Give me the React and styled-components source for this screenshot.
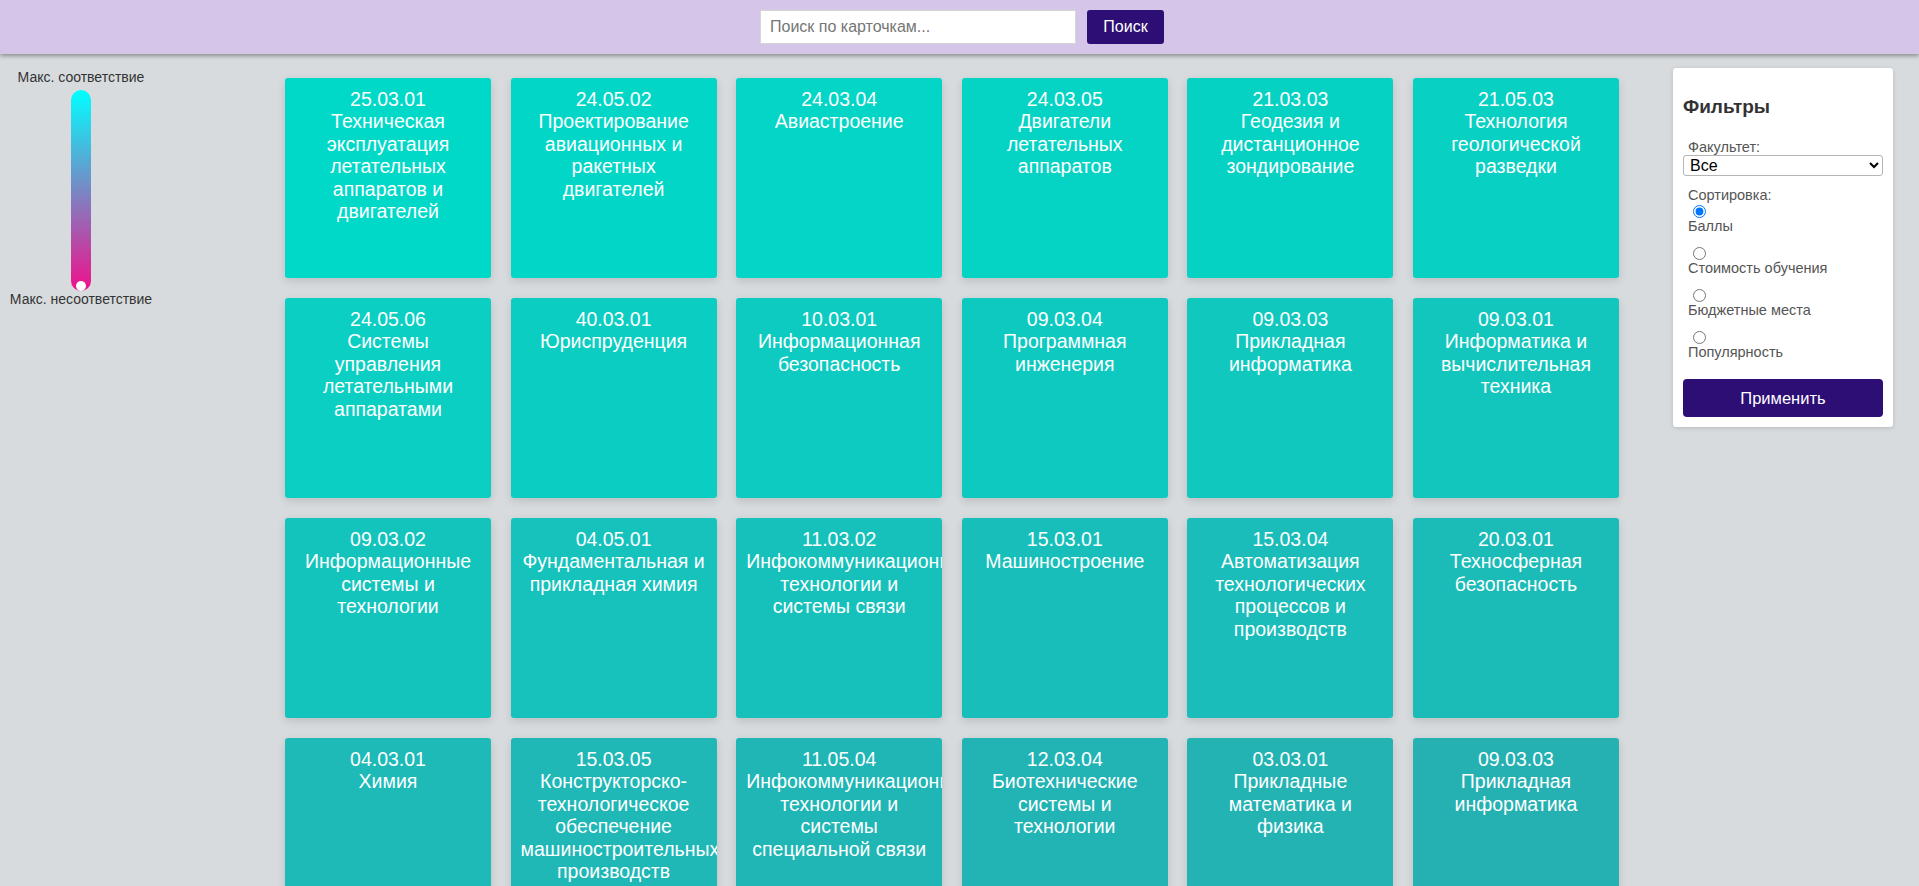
import React, { useState } from 'react';
import styled, { createGlobalStyle } from 'styled-components';

const GlobalStyle = createGlobalStyle`
  html, body {
    margin: 0;
    padding: 0;
  }
  body {
    background: #d8dbde;
    font-family: "Liberation Sans", Arial, sans-serif;
  }
`;

const Header = styled.header`
  position: relative;
  z-index: 2;
  height: 54px;
  background: #d4c5e9;
  box-shadow: 0 2px 4px rgba(0, 0, 0, 0.35);
  display: flex;
  align-items: center;
  justify-content: center;
  padding-left: 5px;
`;

const SearchForm = styled.form`
  display: flex;
  gap: 11px;
`;

const SearchInput = styled.input`
  box-sizing: border-box;
  width: 316px;
  height: 34px;
  padding: 0 9px;
  border: 1px solid #d6d6d6;
  border-radius: 0;
  background: #fff;
  font-family: inherit;
  font-size: 16px;
  color: #222;
  outline: none;
  &::placeholder {
    color: #767676;
  }
`;

const SearchButton = styled.button`
  width: 77px;
  height: 34px;
  border: none;
  border-radius: 3px;
  background: #2d0e74;
  color: #fff;
  font-family: inherit;
  font-size: 16px;
  cursor: pointer;
`;

const Layout = styled.div`
  display: flex;
  align-items: flex-start;
  padding-bottom: 40px;
`;

const Sidebar = styled.aside`
  width: 162px;
  flex-shrink: 0;
  padding-top: 15px;
  display: flex;
  flex-direction: column;
  align-items: center;
  font-size: 14px;
  line-height: 17px;
  color: #333;
`;

const ScaleTrack = styled.div`
  position: relative;
  width: 20px;
  height: 201px;
  margin-top: 4px;
  border-radius: 10px;
  background: linear-gradient(to bottom, #00ffff, #f0108a);
`;

const ScaleThumb = styled.span`
  position: absolute;
  left: 5px;
  bottom: 0;
  width: 10px;
  height: 10px;
  border-radius: 50%;
  background: #fff;
`;

const CardGrid = styled.main`
  display: grid;
  grid-template-columns: repeat(6, 206px);
  column-gap: 19.6px;
  row-gap: 20px;
  margin: 24px 0 0 123px;
`;

const Card = styled.article`
  box-sizing: border-box;
  height: 200px;
  padding: 10px;
  overflow: hidden;
  border-radius: 3px;
  background: ${(p) => p.$bg};
  box-shadow: 0 3px 8px rgba(0, 0, 0, 0.13);
  color: #fff;
  text-align: center;
  font-size: 19.5px;
  line-height: 22.4px;
  cursor: pointer;
`;

const FilterPanel = styled.aside`
  box-sizing: border-box;
  width: 220px;
  flex-shrink: 0;
  margin: 14px 0 0 54px;
  padding: 10px;
  background: #fff;
  border-radius: 3px;
  box-shadow: 0 1px 4px rgba(0, 0, 0, 0.15);
`;

const PanelTitle = styled.h3`
  margin: 18px 0 21px;
  font-size: 19px;
  line-height: 22px;
  font-weight: bold;
  color: #333;
`;

const FieldLabel = styled.div`
  padding-left: 5px;
  font-size: 14.5px;
  line-height: 16px;
  color: #555;
`;

const Select = styled.select`
  display: block;
  box-sizing: border-box;
  width: 200px;
  height: 21px;
  padding: 0 2px;
  border: 1px solid #b5b5b5;
  border-radius: 3px;
  background: #fff;
  font-family: inherit;
  font-size: 16px;
  color: #000;
`;

const SortGroup = styled.div`
  margin-top: 11px;
`;

const RadioOption = styled.label`
  display: flex;
  flex-direction: column;
  align-items: flex-start;
  & + & {
    margin-top: 11px;
  }
`;

const Radio = styled.input`
  width: 13px;
  height: 13px;
  margin: 2px 0 0 10px;
`;

const ApplyButton = styled.button`
  display: block;
  width: 200px;
  height: 38px;
  margin-top: 19px;
  border: none;
  border-radius: 4px;
  background: #2d0e74;
  color: #fff;
  font-family: inherit;
  font-size: 16.5px;
  cursor: pointer;
`;

const programs = [
  ['25.03.01', 'Техническая эксплуатация летательных аппаратов и двигателей'],
  ['24.05.02', 'Проектирование авиационных и ракетных двигателей'],
  ['24.03.04', 'Авиастроение'],
  ['24.03.05', 'Двигатели летательных аппаратов'],
  ['21.03.03', 'Геодезия и дистанционное зондирование'],
  ['21.05.03', 'Технология геологической разведки'],
  ['24.05.06', 'Системы управления летательными аппаратами'],
  ['40.03.01', 'Юриспруденция'],
  ['10.03.01', 'Информационная безопасность'],
  ['09.03.04', 'Программная инженерия'],
  ['09.03.03', 'Прикладная информатика'],
  ['09.03.01', 'Информатика и вычислительная техника'],
  ['09.03.02', 'Информационные системы и технологии'],
  ['04.05.01', 'Фундаментальная и прикладная химия'],
  ['11.03.02', 'Инфокоммуникационные технологии и системы связи'],
  ['15.03.01', 'Машиностроение'],
  ['15.03.04', 'Автоматизация технологических процессов и производств'],
  ['20.03.01', 'Техносферная безопасность'],
  ['04.03.01', 'Химия'],
  ['15.03.05', 'Конструкторско-технологическое обеспечение машиностроительных производств'],
  ['11.05.04', 'Инфокоммуникационные технологии и системы специальной связи'],
  ['12.03.04', 'Биотехнические системы и технологии'],
  ['03.03.01', 'Прикладные математика и физика'],
  ['09.03.03', 'Прикладная информатика'],
  ['01.03.02', 'Прикладная математика и информатика'],
  ['02.03.02', 'Фундаментальная информатика и информационные технологии'],
  ['03.03.02', 'Физика'],
  ['05.03.06', 'Экология и природопользование'],
  ['06.03.01', 'Биология'],
  ['11.03.01', 'Радиотехника'],
  ['11.03.03', 'Конструирование и технология электронных средств'],
  ['11.03.04', 'Электроника и наноэлектроника'],
  ['12.03.01', 'Приборостроение'],
  ['13.03.01', 'Теплоэнергетика и теплотехника'],
  ['13.03.02', 'Электроэнергетика и электротехника'],
  ['15.03.02', 'Технологические машины и оборудование'],
  ['15.03.06', 'Мехатроника и робототехника'],
  ['18.03.01', 'Химическая технология'],
  ['19.03.01', 'Биотехнология'],
  ['21.03.01', 'Нефтегазовое дело'],
  ['22.03.01', 'Материаловедение и технологии материалов'],
  ['23.03.01', 'Технология транспортных процессов'],
  ['24.03.01', 'Ракетные комплексы и космонавтика'],
  ['24.03.02', 'Системы управления движением и навигация'],
  ['27.03.01', 'Стандартизация и метрология'],
  ['27.03.02', 'Управление качеством'],
  ['27.03.04', 'Управление в технических системах'],
  ['28.03.01', 'Нанотехнологии и микросистемная техника'],
  ['38.03.01', 'Экономика'],
  ['38.03.02', 'Менеджмент'],
  ['38.03.04', 'Государственное и муниципальное управление'],
  ['38.03.05', 'Бизнес-информатика'],
  ['39.03.01', 'Социология'],
  ['41.03.05', 'Международные отношения'],
  ['42.03.01', 'Реклама и связи с общественностью'],
  ['45.03.02', 'Лингвистика'],
  ['37.03.01', 'Психология'],
  ['43.03.02', 'Туризм'],
  ['44.03.01', 'Педагогическое образование'],
  ['54.03.01', 'Дизайн'],
  ['01.03.01', 'Математика'],
  ['01.03.03', 'Механика и математическое моделирование'],
  ['02.03.01', 'Математика и компьютерные науки'],
  ['03.03.03', 'Радиофизика'],
  ['04.03.02', 'Химия, физика и механика материалов'],
  ['05.03.01', 'Геология'],
  ['05.03.02', 'География'],
  ['05.03.03', 'Картография и геоинформатика'],
  ['06.03.02', 'Почвоведение'],
  ['07.03.01', 'Архитектура'],
  ['08.03.01', 'Строительство'],
  ['10.05.01', 'Компьютерная безопасность'],
  ['10.05.03', 'Информационная безопасность автоматизированных систем'],
  ['11.05.01', 'Радиоэлектронные системы и комплексы'],
  ['12.03.02', 'Оптотехника'],
  ['12.03.03', 'Фотоника и оптоинформатика'],
  ['14.03.01', 'Ядерная энергетика и теплофизика'],
  ['15.03.03', 'Прикладная механика'],
  ['16.03.01', 'Техническая физика'],
  ['17.05.01', 'Боеприпасы и взрыватели'],
  ['20.03.02', 'Природообустройство и водопользование'],
  ['21.05.01', 'Прикладная геодезия'],
  ['23.03.02', 'Наземные транспортно-технологические комплексы'],
  ['23.03.03', 'Эксплуатация транспортно-технологических машин и комплексов'],
  ['24.05.01', 'Проектирование, производство и эксплуатация ракет'],
  ['25.03.02', 'Техническая эксплуатация авиационных электросистем'],
  ['25.05.05', 'Эксплуатация воздушных судов и организация воздушного движения'],
  ['26.03.01', 'Управление водным транспортом'],
  ['27.03.03', 'Системный анализ и управление'],
  ['27.03.05', 'Инноватика'],
  ['29.03.04', 'Технология художественной обработки материалов'],
  ['38.03.03', 'Управление персоналом'],
  ['40.05.01', 'Правовое обеспечение национальной безопасности'],
  ['42.03.02', 'Журналистика'],
  ['46.03.01', 'История'],
  ['47.03.01', 'Философия'],
];

// colour slides from bright turquoise towards a duller teal with the rank
const cardColor = (i) => {
  const t = i / 23;
  const r = Math.round(0 + 37 * t);
  const g = Math.round(217 - 40 * t);
  const b = Math.round(200 - 22 * t);
  return `rgb(${r}, ${g}, ${b})`;
};

const sortOptions = ['Баллы', 'Стоимость обучения', 'Бюджетные места', 'Популярность'];

const App = () => {
  const [query, setQuery] = useState('');
  const [sort, setSort] = useState('Баллы');

  return (
    <>
      <GlobalStyle />
      <Header>
        <SearchForm onSubmit={(e) => e.preventDefault()}>
          <SearchInput
            value={query}
            onChange={(e) => setQuery(e.target.value)}
            placeholder='Поиск по карточкам...'
          />
          <SearchButton type='submit'>Поиск</SearchButton>
        </SearchForm>
      </Header>
      <Layout>
        <Sidebar>
          <span>Макс. соответствие</span>
          <ScaleTrack>
            <ScaleThumb />
          </ScaleTrack>
          <span>Макс. несоответствие</span>
        </Sidebar>
        <CardGrid>
          {programs.map(([code, name], i) => (
            <Card key={code + i} $bg={cardColor(i)}>
              <div>{code}</div>
              <div>{name}</div>
            </Card>
          ))}
        </CardGrid>
        <FilterPanel>
          <PanelTitle>Фильтры</PanelTitle>
          <FieldLabel>Факультет:</FieldLabel>
          <Select defaultValue='all'>
            <option value='all'>Все</option>
          </Select>
          <SortGroup>
            <FieldLabel>Сортировка:</FieldLabel>
            {sortOptions.map((opt) => (
              <RadioOption key={opt}>
                <Radio
                  type='radio'
                  name='sort'
                  checked={sort === opt}
                  onChange={() => setSort(opt)}
                />
                <FieldLabel>{opt}</FieldLabel>
              </RadioOption>
            ))}
          </SortGroup>
          <ApplyButton>Применить</ApplyButton>
        </FilterPanel>
      </Layout>
    </>
  );
};

export default App;
